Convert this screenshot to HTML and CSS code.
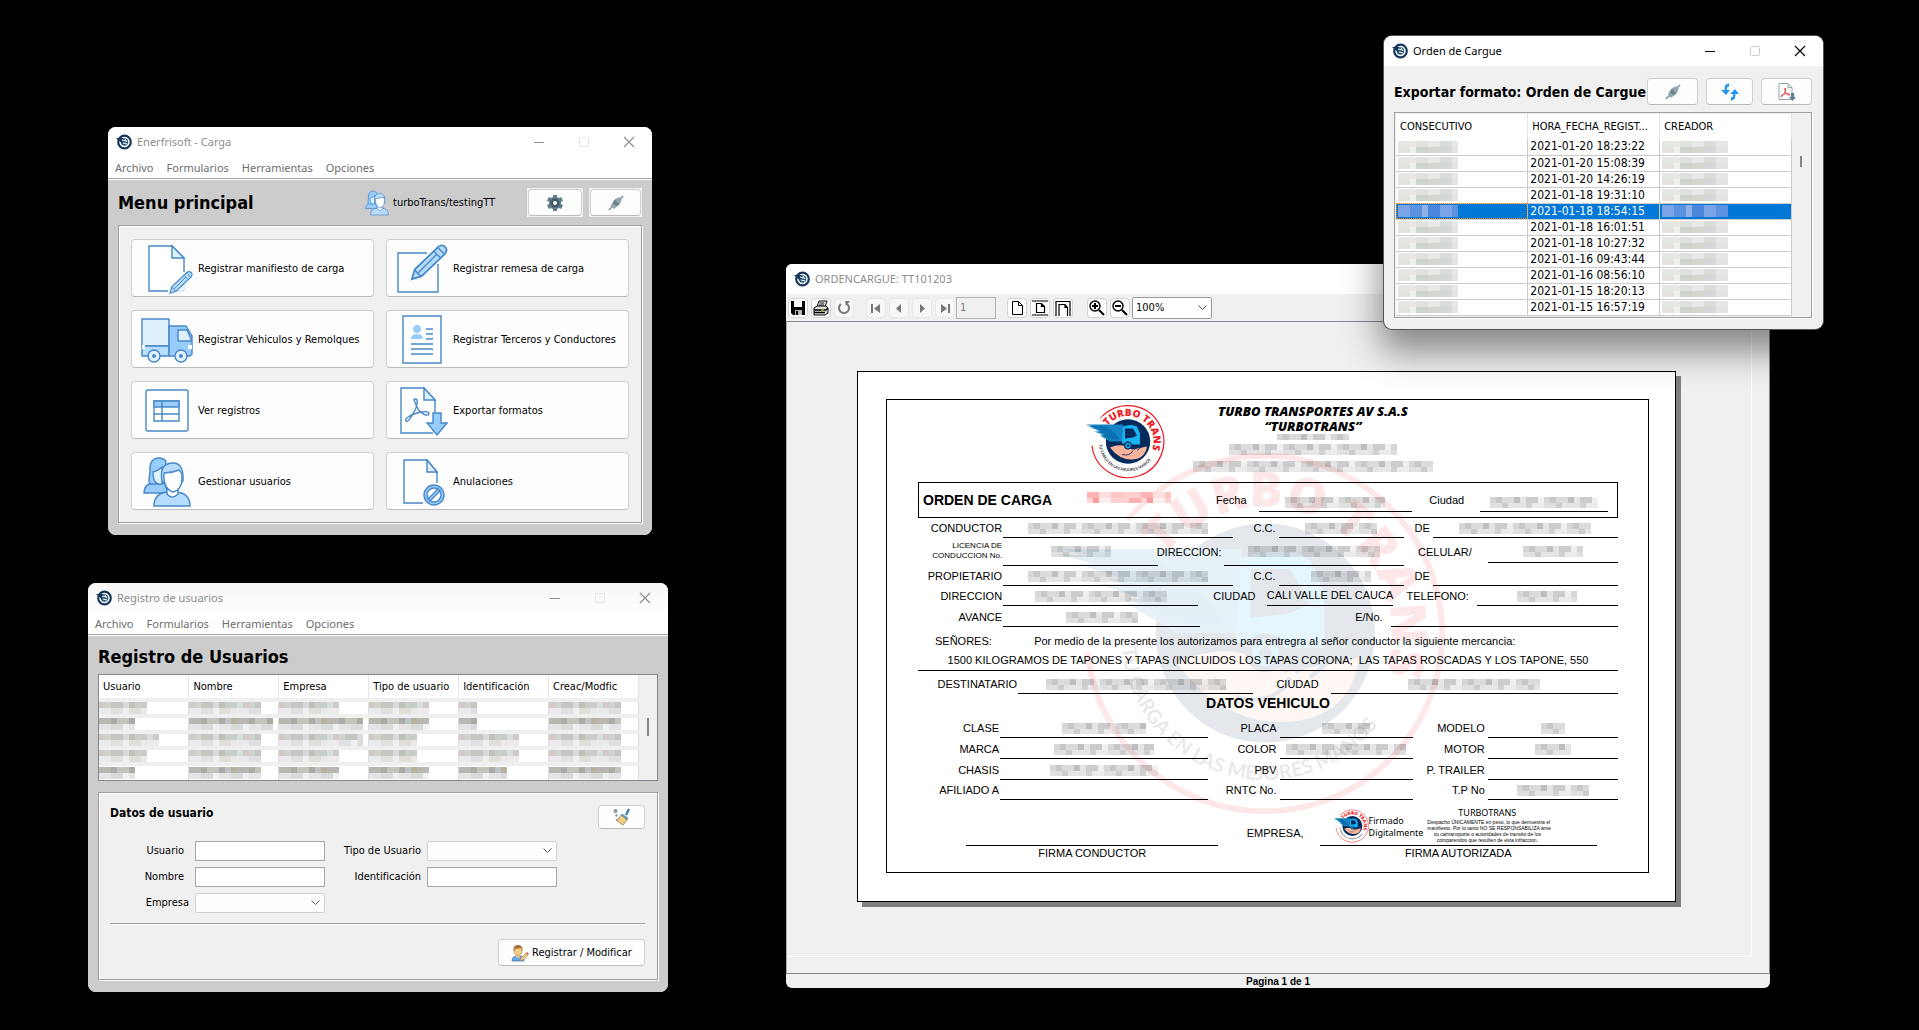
FILE: index.html
```html
<!DOCTYPE html>
<html lang="es">
<head>
<meta charset="utf-8">
<title>Enerfrisoft - Carga</title>
<link rel="stylesheet" href="styles.css">
</head>
<body>
<svg class="defs" aria-hidden="true">
  <defs>
    <symbol id="app" viewBox="0 0 16 16">
      <circle cx="8.500" cy="8" r="6.300" fill="#fff" stroke="#16365c" stroke-width="2.200"/>
      <circle cx="8.500" cy="8" r="3.700" fill="#2c5678"/>
      <path d="M0 4h7.500l-2 5z" fill="#16365c"/>
      <path d="M6 6l4 1M7 9l4 1M9 5l2 3" stroke="#fff" stroke-width="1"/>
    </symbol>
    <symbol id="min" viewBox="0 0 12 12"><path d="M1 6.500h10" stroke="currentColor"/></symbol>
    <symbol id="max" viewBox="0 0 12 12"><rect x="1.500" y="1.500" width="9" height="9" rx="1" fill="none" stroke="currentColor"/></symbol>
    <symbol id="close" viewBox="0 0 12 12"><path d="M1 1l10 10M11 1L1 11" stroke="currentColor" stroke-width="1.200"/></symbol>
    <symbol id="plug" viewBox="0 0 18 18">
      <path d="M1 17l4-4M13 5l4-4" stroke="#78909c" stroke-width="1.600"/>
      <path d="M4 11l4-6 5-2 2 2-2 5-6 5-2-1z" fill="#90a4ae" stroke="#90a4ae"/>
      <path d="M7 6l5 5M6 8l4 4" stroke="#546e7a" stroke-width="1.200"/>
    </symbol>
    <symbol id="pencil" viewBox="0 0 40 40">
      <path d="M3 37l3-10L30 4q4-3 7 0t0 7L13 34z" fill="#b5dcfd" stroke="#4788c7" stroke-width="1.800"/>
      <path d="M29 4l8 8M25 8l8 8M6 27q2 5 7 7M9 31L29 11" fill="none" stroke="#4788c7" stroke-width="1.400"/>
    </symbol>
    <symbol id="people" viewBox="0 0 52 52">
      <g stroke="#4788c7" stroke-width="1.400">
        <path d="M3 37q0-10 12-11h8l4 11z" fill="#98ccfd"/>
        <path d="M8 25q0-4 1-9Q8 2 18 2q4 0 7 3l-2 22-4 1H9z" fill="#98ccfd"/>
        <path d="M12 16q5-1 9-5v17q-9 2-9-12z" fill="#dff0fe"/>
        <path d="M13 50q0-13 14-14h8q14 1 14 14z" fill="#b6dcfe"/>
        <path d="M26 33v5q5 6 11 0v-5z" fill="#fff"/>
        <path d="M21 25Q18 8 31 7q12-1 11 18l-3 3H24z" fill="#b6dcfe"/>
        <path d="M23 17q8 0 15-3 3 2 3 8 0 12-9 14-10-3-9-19z" fill="#fff"/>
      </g>
    </symbol>
    <symbol id="logo" viewBox="-43 -37 80 74">
      <path id="arcTop" d="M-20.500 -15.500A25.700 25.700 0 0 1 24 9" fill="none"/>
      <path id="arcBottom" d="M-29 3A29 29 0 0 0 28 8" fill="none"/>
      <path d="M-36 4A36 36 0 1 0-25-26" fill="none" stroke="#ee1c25" stroke-width="1.200"/>
      <path d="M-28-23l4-4" stroke="#ee1c25"/>
      <circle r="22.200" fill="#052a5c"/>
      <path d="M-42-17H-5L-2 0h-16l-10-6h6l-12-4h8l-12-4h10z" fill="#1583c4"/>
      <path d="M-42-16l20 1 8 6 6 7h-8l-12-5h8l-12-4h8z" fill="#0a6fae"/>
      <path d="M-5-15q8-3 14 0l3 7v11h-10l-8-1z" fill="#18b3f2"/>
      <path d="M-3-13h8l4 7-4 2-8 1z" fill="#052a5c"/>
      <path d="M-18 6q9-4 16-1l6 3 15-3q-2 13-16 13-12 0-21-12z" fill="#fbb49c"/>
      <path d="M-6 13q8 2 11-4M6 8l5-3M9 9l6-5" stroke="#052a5c" stroke-width=".9" fill="none"/>
      <circle cy="4" r="4" fill="#052a5c"/><circle cy="4" r="2.700" fill="#18b3f2"/><circle cy="4" r="1.300" fill="#052a5c"/>
      <text class="logo-name"><textPath href="#arcTop">TURBO TRANS</textPath></text>
      <text class="logo-motto"><textPath href="#arcBottom">TU CARGA EN LAS MEJORES MANOS</textPath></text>
    </symbol>
  </defs>
</svg>

<main class="desktop">

<section class="window menu-window">
  <header class="titlebar">
    <svg class="app"><use href="#app"/></svg><span class="caption">Enerfrisoft - Carga</span>
    <button aria-label="Minimizar"><svg><use href="#min"/></svg></button>
    <button class="off" aria-label="Maximizar" disabled><svg><use href="#max"/></svg></button>
    <button aria-label="Cerrar"><svg><use href="#close"/></svg></button>
  </header>
  <nav class="menubar"><a href="#">Archivo</a><a href="#">Formularios</a><a href="#">Herramientas</a><a href="#">Opciones</a></nav>
  <div class="content">
    <div class="head">
      <h1>Menu principal</h1>
      <svg class="user"><use href="#people"/></svg><span class="session">turboTrans/testingTT</span>
      <span class="slot wide"><button class="btn" aria-label="Ajustes"><svg width="18" height="18" viewBox="0 0 18 18"><path d="M7 1h4v2l2 1 2-1 2 3.500-2 1.500v2l2 1.500-2 3.500-2-1-2 1v2H7v-2l-2-1-2 1-2-3.500L3 10V8L1 6.500 3 3l2 1 2-1z" fill="#607d8b"/><circle cx="9" cy="9" r="4.500" fill="#455a64"/><circle cx="9" cy="9" r="2" fill="#fff"/></svg></button></span>
      <span class="slot"><button class="btn" aria-label="Desconectar"><svg width="16" height="16"><use href="#plug"/></svg></button></span>
    </div>
    <div class="panel tiles">
      <button class="btn tile"><svg viewBox="0 0 52 52"><g class="ln"><path d="M27 48H8V3h23l12 12v14" fill="#fff"/><path d="M31 3v12h12z" fill="#dff0fe"/></g><path d="M36 48h7V38" stroke="#b6dcfe" fill="none"/><use href="#pencil" x="27" y="27" width="25" height="25"/></svg>Registrar manifiesto de carga</button>
      <button class="btn tile"><svg viewBox="0 0 52 52"><path class="ln" d="M31 10H2v39h40V21" fill="#fff"/><use href="#pencil" x="13" y="0" width="39" height="39"/></svg>Registrar remesa de carga</button>
      <button class="btn tile"><svg viewBox="0 0 52 52"><g class="ln"><path d="M1 5h27v27H1z" fill="#dff0fe"/><path d="M1 32h27v10H1z" fill="#b6dcfe"/><path d="M28 12h17l6 10v18l-2 2H28z" fill="#98ccfd"/><path d="M37 16h9l4 9v2H37z" fill="#dff0fe"/><circle cx="13" cy="42" r="6" fill="#dff0fe"/><circle cx="40" cy="42" r="6" fill="#dff0fe"/></g><circle cx="13" cy="42" r="2" fill="#4788c7"/><circle cx="40" cy="42" r="2" fill="#4788c7"/><path d="M1 31h3v4H1zM47 31h4v4h-4z" fill="#fff"/></svg>Registrar Vehiculos y Remolques</button>
      <button class="btn tile"><svg viewBox="0 0 52 52"><g class="ln"><path d="M7 2h38v47H7z" fill="#fff"/><path d="M30 15h7M30 20h7M30 25h7M15 30h22M15 35h22M15 40h22"/></g><circle cx="21" cy="15" r="4" fill="#98ccfd"/><path d="M15 25q0-5 6-5t6 5z" fill="#98ccfd"/></svg>Registrar Terceros y Conductores</button>
      <button class="btn tile"><svg viewBox="0 0 52 52"><g class="ln"><rect x="5" y="5" width="42" height="41" rx="2" fill="#fff"/><path d="M13 16h25v20H13z" fill="#fff"/><path d="M13 16h25v6H13z" fill="#98ccfd"/><path d="M13 29h25M21 16v20"/></g></svg>Ver registros</button>
      <button class="btn tile"><svg viewBox="0 0 52 52"><g class="ln"><path d="M37 48H5V3h23l11 12v12" fill="#fff"/><path d="M28 3v12h11z" fill="#dff0fe"/><path d="M19 14c4-1 2 8-1 13s-6 11-8 9 4-6 11-8 12-2 12 1-9 0-12-7-4-8-2-8z" fill="none"/><path d="M37 28h8v10h6L41 50 31 38h6z" fill="#98ccfd"/></g></svg>Exportar formatos</button>
      <button class="btn tile"><svg><use href="#people"/></svg>Gestionar usuarios</button>
      <button class="btn tile"><svg viewBox="0 0 52 52"><g class="ln"><path d="M27 47H8V4h23l10 12v11" fill="#fff"/><path d="M31 4v12h10z" fill="#dff0fe"/><circle cx="38" cy="39" r="10" fill="#98ccfd"/><circle cx="38" cy="39" r="7" fill="#fff"/><path d="M32 43l10-10 2 2-10 10z" fill="#98ccfd"/></g></svg>Anulaciones</button>
    </div>
  </div>
</section>

<section class="window users-window">
  <header class="titlebar">
    <svg class="app"><use href="#app"/></svg><span class="caption">Registro de usuarios</span>
    <button aria-label="Minimizar"><svg><use href="#min"/></svg></button>
    <button class="off" aria-label="Maximizar" disabled><svg><use href="#max"/></svg></button>
    <button aria-label="Cerrar"><svg><use href="#close"/></svg></button>
  </header>
  <nav class="menubar"><a href="#">Archivo</a><a href="#">Formularios</a><a href="#">Herramientas</a><a href="#">Opciones</a></nav>
  <div class="content">
    <div class="head"><h1>Registro de Usuarios</h1></div>
    <div class="grid-box">
      <table class="users">
        <thead><tr><th>Usuario</th><th>Nombre</th><th>Empresa</th><th>Tipo de usuario</th><th>Identificación</th><th>Creac/Modfic</th></tr></thead>
        <tbody>
          <tr><td><i class="px s48"></i></td><td><i class="px s72"></i></td><td><i class="px s60"></i></td><td><i class="px s60"></i></td><td><i class="px s18"></i></td><td><i class="px s72"></i></td></tr>
          <tr class="dark"><td><i class="px s36"></i></td><td><i class="px s84"></i></td><td><i class="px s84"></i></td><td><i class="px s60"></i></td><td><i class="px s18"></i></td><td><i class="px s72"></i></td></tr>
          <tr><td><i class="px s60"></i></td><td><i class="px s72"></i></td><td><i class="px s84"></i></td><td><i class="px s48"></i></td><td><i class="px s60"></i></td><td><i class="px s72"></i></td></tr>
          <tr><td><i class="px s48"></i></td><td><i class="px s72"></i></td><td><i class="px s60"></i></td><td><i class="px s48"></i></td><td><i class="px s60"></i></td><td><i class="px s72"></i></td></tr>
          <tr class="dark"><td><i class="px s36"></i></td><td><i class="px s72"></i></td><td><i class="px s60"></i></td><td><i class="px s60"></i></td><td><i class="px s48"></i></td><td><i class="px s72"></i></td></tr>
        </tbody>
      </table>
      <div class="scroll"><b></b></div>
    </div>
    <form class="panel user-form">
      <div class="form-head"><h2>Datos de usuario</h2>
        <button type="button" class="btn" aria-label="Limpiar"><svg width="18" height="18" viewBox="0 0 18 18"><path d="M16 1l-3 6" stroke="#3f7cac" stroke-width="2.400"/><path d="M9 6l6 4-1 2-6-4z" fill="#5aa0e8" stroke="#3f7cac" stroke-width=".6"/><path d="M8 7l6 5-4 5-7-5q4-1 5-5z" fill="#f5ce85" stroke="#967a44" stroke-width=".8"/><circle cx="2.500" cy="3" r="2" fill="#8496a8"/><circle cx="3.500" cy="7.500" r="1.200" fill="#8496a8"/></svg></button>
      </div>
      <div class="fields">
        <label class="inset" for="usuario">Usuario</label><input id="usuario" type="text">
        <label for="tipo">Tipo de Usuario</label><select id="tipo"><option></option></select>
        <label class="inset" for="nombre">Nombre</label><input id="nombre" type="text">
        <label for="ident">Identificación</label><input id="ident" type="text">
        <label for="empresa">Empresa</label><select id="empresa"><option></option></select>
      </div>
      <hr>
      <button type="button" class="btn save"><svg width="18" height="18" viewBox="0 0 18 18"><path d="M1 17q0-5 5-5h3q4 0 4 5z" fill="#66a8ea" stroke="#3a6ea5" stroke-width=".7"/><path d="M5 10h4v3l-2 1-2-1z" fill="#f5ce85"/><ellipse cx="7" cy="6.500" rx="4" ry="5" fill="#f5ce85" stroke="#a6713a" stroke-width=".6"/><path d="M2.500 7Q2 1 7 1t4.500 5.500L10 4 4 5z" fill="#a6713a"/><path d="M9 17l1-3 5-5 2 2-5 5z" fill="#f5ce85" stroke="#967a44" stroke-width=".6"/><path d="M15 9l1-1 2 2-1 1z" fill="#e0565b"/></svg>Registrar / Modificar</button>
    </form>
  </div>
</section>

<section class="window viewer-window">
  <header class="titlebar">
    <svg class="app"><use href="#app"/></svg><span class="caption">ORDENCARGUE: TT101203</span>
  </header>
  <div class="toolbar">
    <button aria-label="Guardar"><svg viewBox="0 0 16 16"><path d="M1 1h14v14H3l-2-2z"/><path d="M4 1h8v6H4z" fill="#fff"/><path d="M5 10h7v5H5z" fill="#bbb"/><path d="M6 11h2v4H6z"/></svg></button>
    <button aria-label="Imprimir"><svg viewBox="0 0 16 16"><path d="M4 7l2-6h8l-2 6z" fill="#fff" stroke="#000"/><path d="M6.500 3h5M6 5h5" stroke="#000"/><path d="M1 8l3-2h9l2 2v5l-3 2H1z" fill="#ddd" stroke="#000"/><path d="M1 10h12M1 12.500h11M13 10l2-2" stroke="#000" stroke-width="1.400"/><path d="M8 10h3" stroke="#dd0"/></svg></button>
    <button class="dim gap" aria-label="Recargar"><svg viewBox="0 0 16 16"><path d="M5 4a5 5 0 1 0 6 0" fill="none" stroke="#777" stroke-width="2"/><path d="M9 1h5l-4 5z" fill="#777"/></svg></button>
    <button class="dim" aria-label="Primera"><svg viewBox="0 0 16 16"><path d="M4 4v9" stroke="#777" stroke-width="2"/><path d="M12 4v9L6 8.500z" fill="#777"/></svg></button>
    <button class="dim" aria-label="Anterior"><svg viewBox="0 0 16 16"><path d="M10 4v9L5 8.500z" fill="#777"/></svg></button>
    <button class="dim" aria-label="Siguiente"><svg viewBox="0 0 16 16"><path d="M6 4v9l5-4.500z" fill="#777"/></svg></button>
    <button class="dim last" aria-label="Ultima"><svg viewBox="0 0 16 16"><path d="M12 4v9" stroke="#777" stroke-width="2"/><path d="M4 4v9l6-4.500z" fill="#777"/></svg></button>
    <input class="pageno" aria-label="Pagina" value="1" disabled>
    <button aria-label="Tamaño real"><svg viewBox="0 0 16 16"><path d="M3.500 1.500h6l4 4v9h-10zM9.500 1.500v4h4" fill="#fff" stroke="#000"/></svg></button>
    <button aria-label="Ajustar pagina"><svg viewBox="0 0 16 16"><path d="M0 1h16M0 15h16M4.500 3.500h5l3 3v6h-8zM9.500 3.500v3h3" fill="#fff" stroke="#000" stroke-width="1.200"/></svg></button>
    <button class="gap wide-gap" aria-label="Ajustar ancho"><svg viewBox="0 0 16 16"><path d="M1 16V1.500h14V16M4 16V4.500h6l2.500 3V16M10 4.500v3h2.500" fill="#fff" stroke="#000" stroke-width="1.200"/></svg></button>
    <button aria-label="Acercar"><svg viewBox="0 0 16 16"><circle cx="6" cy="6" r="5" fill="#fff" stroke="#000" stroke-width="1.400"/><path d="M6 3v6M3 6h6M10 10l5 5" stroke="#000" stroke-width="2"/></svg></button>
    <button aria-label="Alejar"><svg viewBox="0 0 16 16"><circle cx="6" cy="6" r="5" fill="#fff" stroke="#000" stroke-width="1.400"/><path d="M3 6h6M10 10l5 5" stroke="#000" stroke-width="2"/></svg></button>
    <select class="zoom" aria-label="Zoom"><option>100%</option></select>
  </div>
  <div class="view"><div class="canvas">
    <article class="sheet"><div class="frame">
      <svg class="watermark"><use href="#logo"/></svg>
      <div class="letterhead">
        <svg class="brand"><use href="#logo"/></svg>
        <div class="company"><strong>TURBO TRANSPORTES AV S.A.S</strong><strong>“TURBOTRANS”</strong>
          <i class="mz m72 thin"></i><i class="mz m168"></i><i class="mz m240"></i></div>
      </div>
      <div class="form">
        <div class="row order"><b>ORDEN DE CARGA</b><i class="mz red m84"></i><span class="lb p12">Fecha</span><span class="ln-b"><i class="mz m100"></i></span><span class="lb p16">Ciudad</span><span class="ln-b"><i class="mz m108"></i></span></div>
        <div class="row a h20"><span class="lb">CONDUCTOR</span><span class="ln-b"><i class="mz m180"></i></span><span class="lb">C.C.</span><span class="ln-b"><i class="mz m72"></i></span><span class="lb">DE</span><span class="ln-b"><i class="mz m132"></i></span></div>
        <div class="row b h28"><span class="lb tiny">LICENCIA DE<br>CONDUCCION No.</span><span class="ln-b up"><i class="mz m60"></i></span><span class="lb">DIRECCION:</span><span class="ln-b up"><i class="mz m132"></i></span><span class="lb p16">CELULAR/</span><span class="ln-b lift up"><i class="mz m60"></i></span></div>
        <div class="row a h20"><span class="lb">PROPIETARIO</span><span class="ln-b"><i class="mz m180"></i></span><span class="lb">C.C.</span><span class="ln-b"><i class="mz m60"></i></span><span class="lb">DE</span><span class="ln-b"></span></div>
        <div class="row c h20"><span class="lb">DIRECCION</span><span class="ln-b"><i class="mz m132"></i></span><span class="lb p12">CIUDAD</span><span class="ln-b"><span>CALI VALLE DEL CAUCA</span></span><span class="lb p8">TELEFONO:</span><span class="ln-b"><i class="mz m60"></i></span></div>
        <div class="row d h21"><span class="lb">AVANCE</span><span class="ln-b"><i class="mz m72"></i></span><span class="lb p8">E/No.</span><span class="ln-b"></span></div>
        <div class="row e h24"><span>SEÑORES:</span><span>Por medio de la presente los autorizamos para entregra al señor conductor la siguiente mercancia:</span></div>
        <div class="goods">1500 KILOGRAMOS DE TAPONES Y TAPAS (INCLUIDOS LOS TAPAS CORONA;&nbsp; LAS TAPAS ROSCADAS Y LOS TAPONE, 550</div>
        <div class="row f h23"><span class="lb">DESTINATARIO</span><span class="ln-b"><i class="mz m180"></i></span><span class="lb p12">CIUDAD</span><span class="ln-b"><i class="mz m132"></i></span></div>
        <h3>DATOS VEHICULO</h3>
        <div class="row g h26"><span class="lb">CLASE</span><span class="ln-b"><i class="mz m84"></i></span><span class="lb">PLACA</span><span class="ln-b"><i class="mz m48"></i></span><span class="lb">MODELO</span><span class="ln-b"><i class="mz m24"></i></span></div>
        <div class="row g h21"><span class="lb">MARCA</span><span class="ln-b"><i class="mz m100"></i></span><span class="lb">COLOR</span><span class="ln-b"><i class="mz m120"></i></span><span class="lb">MOTOR</span><span class="ln-b"><i class="mz m36"></i></span></div>
        <div class="row g h21"><span class="lb">CHASIS</span><span class="ln-b"><i class="mz m108"></i></span><span class="lb">PBV</span><span class="ln-b"></span><span class="lb">P. TRAILER</span><span class="ln-b"></span></div>
        <div class="row g h20"><span class="lb">AFILIADO A</span><span class="ln-b"></span><span class="lb">RNTC No.</span><span class="ln-b"></span><span class="lb">T.P No</span><span class="ln-b"><i class="mz m72"></i></span></div>
        <div class="row sign"><span></span><span class="ln-b"></span><span class="lb p16">EMPRESA,</span>
          <div class="ln-b stamp"><svg><use href="#logo"/></svg><p class="signed">Firmado<br>Digitalmente</p><p class="legal"><b>TURBOTRANS</b>Despacho ÚNICAMENTE en peso, lo que demuestra el<br>manifiesto. Por lo tanto NO SE RESPONSABILIZA ante<br>su cartransporte o autoridades de transito de los<br>comparendos que resulten de esta infraccion.</p></div></div>
        <div class="row sign caps"><span></span><span>FIRMA CONDUCTOR</span><span></span><span>FIRMA AUTORIZADA</span></div>
      </div>
    </div></article>
  </div></div>
  <footer>Pagina 1 de 1</footer>
</section>

<section class="window export-window">
  <header class="titlebar">
    <svg class="app"><use href="#app"/></svg><span class="caption">Orden de Cargue</span>
    <button aria-label="Minimizar"><svg><use href="#min"/></svg></button>
    <button class="off" aria-label="Maximizar" disabled><svg><use href="#max"/></svg></button>
    <button aria-label="Cerrar"><svg><use href="#close"/></svg></button>
  </header>
  <div class="head"><h1>Exportar formato: Orden de Cargue</h1>
    <button class="btn" aria-label="Desconectar"><svg width="16" height="16"><use href="#plug"/></svg></button>
    <button class="btn" aria-label="Actualizar"><svg width="18" height="18" viewBox="0 0 18 18"><path d="M7 2q-3 1-2 6M11 16q3-1 2-6" fill="none" stroke="#2196f3" stroke-width="2.400"/><path d="M0 7h9l-4 5zM9 11h9l-4-5zM4 3l4-3v4zM14 15l-4 3v-4z" fill="#2196f3"/></svg></button>
    <button class="btn" aria-label="Exportar PDF"><svg width="18" height="18" viewBox="0 0 18 18"><path d="M1 .5h9l4 4v12H1z" fill="#fff" stroke="#90a4ae"/><path d="M10 .5v4h4" fill="none" stroke="#90a4ae"/><path d="M7 5q2 0 0 4t-4 5q-1-2 4-3t5 1q-2 1-4-2T7 5z" fill="none" stroke="#d9534f"/><path d="M13 10h3v4h2l-3.500 4L11 14h2z" fill="#607d8b"/></svg></button>
  </div>
  <div class="grid-box">
    <table class="orders">
      <thead><tr><th>CONSECUTIVO</th><th>HORA_FECHA_REGIST...</th><th>CREADOR</th></tr></thead>
      <tbody>
        <tr><td><i class="px s60"></i></td><td>2021-01-20 18:23:22</td><td><i class="px s66"></i></td></tr>
        <tr><td><i class="px s60"></i></td><td>2021-01-20 15:08:39</td><td><i class="px s66"></i></td></tr>
        <tr><td><i class="px s60"></i></td><td>2021-01-20 14:26:19</td><td><i class="px s66"></i></td></tr>
        <tr><td><i class="px s60"></i></td><td>2021-01-18 19:31:10</td><td><i class="px s66"></i></td></tr>
        <tr class="sel"><td><i class="px s60"></i></td><td>2021-01-18 18:54:15</td><td><i class="px s66"></i></td></tr>
        <tr><td><i class="px s60"></i></td><td>2021-01-18 16:01:51</td><td><i class="px s66"></i></td></tr>
        <tr><td><i class="px s60"></i></td><td>2021-01-18 10:27:32</td><td><i class="px s66"></i></td></tr>
        <tr><td><i class="px s60"></i></td><td>2021-01-16 09:43:44</td><td><i class="px s66"></i></td></tr>
        <tr><td><i class="px s60"></i></td><td>2021-01-16 08:56:10</td><td><i class="px s66"></i></td></tr>
        <tr><td><i class="px s60"></i></td><td>2021-01-15 18:20:13</td><td><i class="px s66"></i></td></tr>
        <tr><td><i class="px s60"></i></td><td>2021-01-15 16:57:19</td><td><i class="px s66"></i></td></tr>
      </tbody>
    </table>
    <div class="scroll"><b></b></div>
  </div>
</section>

</main>
</body>
</html>
```
FILE: styles.css
```css
* { box-sizing: border-box; }
body { margin: 0; background: #000; color: #000; font: 11px/14px "DejaVu Sans Condensed", Roboto, sans-serif; }
h1, h2, h3, p { margin: 0; }
button, input, select { font: inherit; color: inherit; padding: 0; margin: 0; }
.defs { position: absolute; width: 0; height: 0; }
.desktop { position: relative; min-height: 100vh; overflow: hidden; }

/* windows */
.window { position: absolute; overflow: hidden; border-radius: 8px; background: #f0f0f0; }
.menu-window { left: 108px; top: 127px; width: 544px; }
.users-window { left: 88px; top: 583px; width: 580px; }
.viewer-window { left: 786px; top: 264px; width: 984px; border-radius: 6px; }
.export-window { left: 1384px; top: 36px; width: 439px; padding-bottom: 11px; box-shadow: 0 0 0 1px #555, 0 18px 36px 4px rgba(0, 0, 0, .45); }

.titlebar { display: flex; align-items: center; height: 30px; padding: 0 17px 0 8px; background: #fff; color: #8d8d8d; font: 11px/16px "Noto Sans", "Open Sans", sans-serif; }
.titlebar .app { width: 16px; height: 16px; margin-right: 5px; }
.titlebar .caption { flex: 1; }
.titlebar button { width: 12px; height: 12px; margin-left: 33px; border: 0; background: none; display: block; }
.titlebar button svg { display: block; width: 12px; height: 12px; }
.titlebar .off { color: #e2e2e2; }
.export-window .titlebar { color: #000; }
.export-window .titlebar .off { color: #ccc; }
.menubar { display: flex; gap: 13px; height: 22px; padding: 3px 7px 0; background: #fff; border-bottom: 1px solid #a0a0a0; margin-bottom: 1px; font: 11px/16px "Noto Sans", "Open Sans", sans-serif; }
.menubar a { color: #6d6d6d; text-decoration: none; }
.content { background: #ccc; padding: 0 10px 12px; border-top: 1px solid #fff; margin-top: -1px; }

.head { display: flex; align-items: center; height: 45px; }
h1 { font-size: 18px; line-height: 22px; font-weight: 700; flex: 1; min-width: 0; white-space: nowrap; }
h2 { font-size: 12px; line-height: 16px; }
.btn { border: 1px solid #d0d0d0; border-bottom-color: #bcbcbc; border-radius: 4px; background: #fdfdfd; display: flex; align-items: center; justify-content: center; flex: none; }
.panel { background: #f0f0f0; border: 1px solid #a0a0a0; box-shadow: inset 1px 1px #fff, 1px 1px #fff; }

/* main menu */
.user { width: 26px; height: 26px; margin-right: 3px; }
.session { width: 134px; }
.slot { background: #f0f0f0; padding: 1px; width: 53px; height: 29px; }
.slot.wide { width: 56px; margin-right: 6px; }
.slot .btn { width: 100%; height: 100%; }
.tiles { display: grid; grid-template-columns: 1fr 1fr; gap: 13px 12px; padding: 13px 12px 12px; }
.tile { height: 58px; justify-content: flex-start; gap: 5px; padding-left: 9px; padding-top: 1px; white-space: nowrap; }
.tile svg { width: 52px; height: 52px; flex: none; }
.ln { stroke: #4788c7; stroke-width: 1.400px; fill: none; }

/* users */
.users-window .titlebar { background: linear-gradient(#f6f6f6, #fff); }
.users-window .head { height: 38px; padding-top: 4px; }
.grid-box { display: flex; border: 1px solid #828790; background: #f0f0f0; }
table { border-collapse: collapse; table-layout: fixed; width: calc(100% - 18px); }
th { font-weight: 400; text-align: left; background: #fff; border-right: 1px solid #e5e5e5; white-space: nowrap; overflow: hidden; padding: 0 0 0 4px; }
td { padding: 0; background: #fff; border-right: 1px solid #ddd; }
.users th { height: 25px; }
.users td { height: 16px; line-height: 0; border-top: 4px solid #efefef; }
.scroll { width: 18px; flex: none; display: flex; justify-content: center; }
.scroll b { width: 2px; height: 18px; margin-top: 43px; background: #858585; }
.px { display: block; height: 12px; background:
  repeating-linear-gradient(90deg, #d3c9c6 0 6px, #cfd3ce 6px 12px, #c4c6c2 12px 24px, #d5dadb 24px 30px, #bfc0b7 30px 36px, #c9cdca 36px 48px, #d7dfdc 48px 54px) 0 0 / 100% 6px no-repeat,
  repeating-linear-gradient(90deg, #ecebec 0 12px, #dfe1de 12px 24px, #eef0f2 24px 30px, #dedfd9 30px 42px, #e9e9e9 42px 48px) 0 6px / 100% 6px no-repeat; }
.dark .px { background:
  repeating-linear-gradient(90deg, #b9b7b2 0 12px, #a9ada9 12px 18px, #c3c5ba 18px 30px, #abaaa6 30px 36px, #bcc2c6 36px 42px, #b8b29d 42px 48px) 0 0 / 100% 6px no-repeat,
  repeating-linear-gradient(90deg, #e4e4e5 0 12px, #d8dbd8 12px 24px, #eef0f2 24px 30px) 0 6px / 100% 6px no-repeat; }
.orders .px { background:
  repeating-linear-gradient(90deg, #e6e6e4 0 12px, #ebe8e4 12px 18px, #dfe3dd 18px 30px, #e8e8e8 30px 42px, #d9dedb 42px 54px) 0 0 / 100% 6px no-repeat,
  repeating-linear-gradient(90deg, #e4e3e0 0 12px, #ecf3ec 12px 18px, #cdd3cb 18px 30px, #d7d4d0 30px 42px, #d3d8d6 42px 54px) 0 6px / 100% 6px no-repeat; }
.s18 { width: 18px; } .s36 { width: 36px; } .s48 { width: 48px; } .s60 { width: 60px; } .s66 { width: 66px; } .s72 { width: 72px; } .s84 { width: 84px; }

.user-form { margin-top: 11px; padding: 12px 12px 13px 11px; }
.form-head { display: flex; justify-content: space-between; align-items: flex-start; height: 36px; }
.form-head .btn { width: 47px; height: 24px; }
.fields { display: grid; grid-template-columns: 79px 130px 90px 130px; grid-auto-rows: 20px; gap: 6px; align-items: center; }
.fields label { text-align: right; white-space: nowrap; }
.fields .inset { padding-right: 5px; }
.fields input { width: 100%; height: 20px; border: 1px solid #a6a6ae; background: #fff; }
select { appearance: none; width: 100%; height: 20px; border: 1px solid #d0d0d0; border-radius: 2px; background: #fdfdfd url("data:image/svg+xml,%3Csvg xmlns='http://www.w3.org/2000/svg' width='9' height='6'%3E%3Cpath d='M.5.5l4 4 4-4' fill='none' stroke='%23555'/%3E%3C/svg%3E") no-repeat right 4px center; }
hr { margin: 10px 0 14px; border: 0; border-top: 1px solid #a0a0a0; border-bottom: 1px solid #fff; }
.save { width: 147px; height: 27px; margin-left: auto; gap: 3px; white-space: nowrap; }

/* report viewer */
.toolbar { display: flex; align-items: center; gap: 3px; height: 27px; padding: 0 2px; }
.toolbar button { width: 20px; height: 20px; border: 1px solid #d4d4d4; border-radius: 4px; background: #fdfdfd; display: flex; align-items: center; justify-content: center; }
.toolbar button svg { width: 16px; height: 16px; flex: none; }
.toolbar .dim { background: #f7f7f7; border-color: #e8e8e8; }
.toolbar .gap { margin-right: 9px; }
.toolbar .wide-gap { margin-right: 11px; }
.toolbar .last { margin-right: -2px; }
.toolbar .pageno { width: 40px; height: 22px; border: 1px solid #b4b4b4; background: #f0f0f0; color: #808080; padding-left: 3px; margin-right: 8px; }
.toolbar .zoom { width: 80px; height: 22px; border-color: #999; padding-left: 3px; margin-left: -1px; background-color: #fff; }
.view { border: 1px solid #828790; border-left-color: #a8acb4; padding: 0 17px 16px 0; }
.canvas { border: solid #fff; border-width: 0 1px 1px 0; padding: 49px 75px 54px 70px; }
.sheet { background: #fff; border: 1px solid #000; box-shadow: 5px 5px #808080; padding: 27px 26px 28px 28px; }
.frame { position: relative; border: 1px solid #000; padding-bottom: 12px; font: 11px/14px "Liberation Sans", Arial, sans-serif; }
.watermark { position: absolute; left: 166px; top: 50px; width: 395px; height: 366px; opacity: .1; }
.letterhead { position: relative; display: flex; height: 82px; padding: 4px 0 0 198px; }
.brand { width: 80px; height: 75px; flex: none; }
.company { width: 296px; display: flex; flex-direction: column; align-items: center; }
.company strong { font: italic 800 13px/15px "Open Sans", Lato, sans-serif; white-space: nowrap; }
.company .mz { margin-bottom: 6px; }
.company .thin { height: 6px; margin-bottom: 4px; }
.logo-name { font: 800 10px "Open Sans", sans-serif; fill: #ee1c25; }
.logo-motto { font: 700 4px Lato, sans-serif; fill: #333; }
.form { position: relative; margin: 0 30px 0 31px; }
.row { display: grid; align-items: end; }
.row > * { min-width: 0; white-space: nowrap; }
.order { grid-template-columns: 168fr 84fr 88fr 154fr 68fr 128fr 9fr; height: 36px; border: 1px solid #000; padding-bottom: 5px; }
.order b { font-size: 14px; line-height: 16px; padding: 0 0 4px 4px; }
.order > .lb { padding-bottom: 5px; }
.a { grid-template-columns: 85fr 230fr 45fr 125fr 29fr 185fr; }
.b { grid-template-columns: 85fr 155fr 66fr 179fr 84fr 130fr; }
.c { grid-template-columns: 85fr 195fr 69fr 125fr 84fr 141fr; }
.d { grid-template-columns: 85fr 197fr 190fr 227fr; }
.e { grid-template-columns: 99fr 583fr; padding: 0 0 3px 17px; }
.f { grid-template-columns: 100fr 235fr 77fr 287fr; }
.g { grid-template-columns: 82fr 208fr 71fr 133fr 75fr 130fr; }
.h20 { height: 20px; } .h21 { height: 21px; } .h23 { height: 23px; } .h24 { height: 24px; } .h26 { height: 26px; } .h28 { height: 28px; }
.lb { display: flex; justify-content: flex-end; padding: 0 3px 3px 0; }
.row > .lb:first-child { padding-right: 1px; }
.b > .lb { padding-bottom: 7px; }
.row > .tiny { font-size: 8px; line-height: 10px; text-align: right; padding-bottom: 5px; }
.row > .p8 { padding-right: 8px; } .row > .p12 { padding-right: 12px; } .row > .p16 { padding-right: 16px; }
.ln-b { display: flex; align-items: flex-end; justify-content: center; min-height: 14px; padding-bottom: 3px; border-bottom: 1px solid #000; }
.up { padding-bottom: 8px; }
.lift { margin-bottom: 3px; padding-bottom: 5px; }
.goods { height: 20px; padding-top: 2px; border-bottom: 1px solid #000; text-align: center; white-space: nowrap; }
h3 { font-size: 14px; line-height: 18px; text-align: center; }
.sign { grid-template-columns: 48fr 252fr 101fr 277fr 21fr; height: 46px; }
.sign .lb { padding-bottom: 6px; }
.caps { height: 14px; text-align: center; }
.stamp { justify-content: flex-start; padding: 0 0 2px 13px; }
.stamp svg { width: 36px; height: 34px; flex: none; }
.signed { font: 9px/12px "Noto Sans", sans-serif; padding-bottom: 4px; }
.legal { font: 5px/6px "Liberation Sans", Arial, sans-serif; text-align: center; width: 120px; margin-left: 4px; flex: none; }
.legal b { display: block; font: 9px/12px "Noto Sans", sans-serif; }
.mz { display: block; height: 11px; background:
  repeating-linear-gradient(90deg, rgba(0,0,0,.16) 0 6px, rgba(0,0,0,.22) 6px 12px, rgba(0,0,0,.14) 12px 24px, rgba(0,0,0,.25) 24px 30px, rgba(0,0,0,.1) 30px 36px, rgba(0,0,0,.2) 36px 48px, rgba(0,0,0,.06) 48px 54px) 0 0 / 100% 6px no-repeat,
  repeating-linear-gradient(90deg, rgba(0,0,0,.12) 0 12px, rgba(0,0,0,.2) 12px 18px, rgba(0,0,0,.1) 18px 36px, rgba(0,0,0,.18) 36px 42px, rgba(0,0,0,.08) 42px 54px) 0 6px / 100% 5px no-repeat; }
.mz.red { align-self: center; background:
  repeating-linear-gradient(90deg, #ffb3b3 0 12px, #ffe0e0 12px 24px, #ffc4c4 24px 36px, #ffcece 36px 54px) 0 0 / 100% 6px no-repeat,
  repeating-linear-gradient(90deg, #ffd8d8 0 6px, #ff9a9a 6px 12px, #fff0f0 12px 24px, #ffd2d2 24px 42px, #ffb0b0 42px 54px) 0 6px / 100% 5px no-repeat; }
.m24 { width: 24px; } .m36 { width: 36px; } .m48 { width: 48px; } .m60 { width: 60px; } .m72 { width: 72px; } .m84 { width: 84px; } .m100 { width: 100px; } .m108 { width: 108px; } .m120 { width: 120px; } .m132 { width: 132px; } .m168 { width: 168px; } .m180 { width: 180px; } .m240 { width: 240px; }
.viewer-window footer { height: 14px; text-align: center; font: 700 10px/16px "Liberation Sans", Arial, sans-serif; }

/* export window */
.export-window .head { gap: 8px; padding: 5px 11px 0 10px; height: 46px; }
.export-window h1 { font-size: 14px; line-height: 18px; }
.export-window .head { justify-content: flex-end; }
.export-window .btn { width: 51px; height: 27px; }
.export-window .btn:nth-of-type(2) { width: 47px; }
.export-window .grid-box { margin: 0 11px 0 10px; border-color: #a0a0a0; padding: 1px; box-shadow: 1px 1px #fff; }
.orders th { height: 25px; }
.orders td { height: 16px; border: 1px solid #ccc; border-width: 0 1px 1px 0; font-size: 12px; line-height: 15px; padding-left: 2px; white-space: nowrap; }
.orders .sel td { background: #0078d7; color: #fff; }
.orders .sel .px { background: repeating-linear-gradient(90deg, #7ba4e6 0 12px, #5b93e0 12px 24px, #8fb0ea 24px 30px, #4a86dc 30px 42px); }
.orders .sel td:first-child { outline: 1px dotted #f80; outline-offset: -1px; }
.export-window .scroll b { height: 11px; margin-top: 42px; }
```
